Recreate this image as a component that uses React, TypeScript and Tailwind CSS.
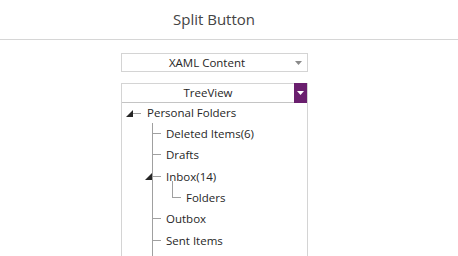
import React from 'react';

type Node = { label: string; children?: Node[] };

const tree: Node = {
    label: 'Personal Folders',
    children: [
        { label: 'Deleted Items(6)' },
        { label: 'Drafts' },
        { label: 'Inbox(14)', children: [{ label: 'Folders' }] },
        { label: 'Outbox' },
        { label: 'Sent Items' },
    ],
};

const Expander = () => (
    <svg width="7" height="7" viewBox="0 0 7 7" className="shrink-0">
        <polygon points="7,0 7,7 0,7" fill="#262626" />
    </svg>
);

const DropArrow: React.FC<{ color: string }> = ({ color }) => (
    <svg width="7" height="4" viewBox="0 0 7 4">
        <polygon points="0,0 7,0 3.5,4" fill={color} />
    </svg>
);

export default function App() {
    return (
        <div className="w-[458px] h-[256px] overflow-hidden bg-white text-[#262626]" style={{ fontFamily: '"Open Sans", sans-serif' }}>
            <div className="h-[40px] flex items-center justify-center pr-[30px] border-b border-[#d6d6d6] text-[15px] text-[#444]">
                Split Button
            </div>
            <div className="flex flex-col items-start pl-[121px] pt-[13px]">
                <div className="w-[187px] h-[19px] border border-[#d4d4d4] flex items-center relative">
                    <span className="flex-1 text-center text-[11.5px] leading-none pr-[15px]">XAML Content</span>
                    <span className="absolute right-[5px] top-[7px]"><DropArrow color="#8a8a8a" /></span>
                </div>
                <div className="mt-[11px] w-[187px] border border-[#d4d4d4] border-b-0">
                    <div className="h-[19px] flex items-center border-b border-[#c4c4c4] relative">
                        <span className="flex-1 text-center text-[11.5px] leading-none pr-[13px]">TreeView</span>
                        <span className="absolute right-0 -top-[1px] w-[13px] h-[20px] bg-[#6a1f6e] flex items-center justify-center">
                            <DropArrow color="#ffffff" />
                        </span>
                    </div>
                    <div className="text-[11.5px] pb-[20px]">
                        <div className="h-[20px] flex items-center pl-[4px]">
                            <Expander />
                            <div className="w-[8px] h-px bg-[#a0a0a0]" />
                            <span className="ml-[6px]">{tree.label}</span>
                        </div>
                        <div className="relative">
                            <div className="absolute left-[30px] top-0 -bottom-[20px] w-px bg-[#a0a0a0]" />
                            {tree.children!.map((c) => (
                                <div key={c.label}>
                                    <div className="h-[21.33px] flex items-center relative pl-[31px]">
                                        {c.children ? (
                                            <span className="absolute left-[23px] top-[7px]"><Expander /></span>
                                        ) : null}
                                        <div className="w-[8px] h-px bg-[#a0a0a0]" />
                                        <span className="ml-[5px]">{c.label}</span>
                                    </div>
                                    {c.children?.map((g) => (
                                        <div key={g.label} className="h-[21.33px] flex items-center relative pl-[51px]">
                                            <div className="absolute left-[50px] -top-[6px] h-[17px] w-px bg-[#a0a0a0]" />
                                            <div className="w-[8px] h-px bg-[#a0a0a0]" />
                                            <span className="ml-[5px]">{g.label}</span>
                                        </div>
                                    ))}
                                </div>
                            ))}
                        </div>
                    </div>
                </div>
            </div>
        </div>
    );
}
